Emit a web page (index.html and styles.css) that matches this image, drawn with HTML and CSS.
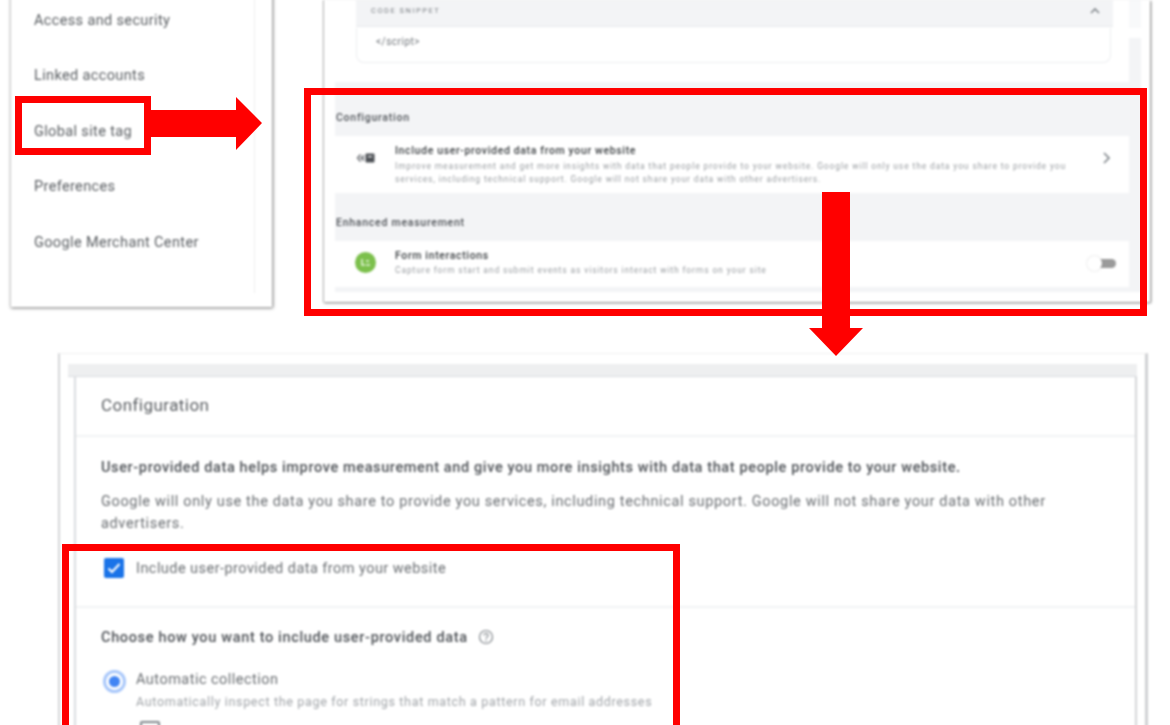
FILE: index.html
```html
<!DOCTYPE html>
<html lang="en">
<head>
    <meta charset="UTF-8">
    <meta name="viewport" content="width=device-width, initial-scale=1.0">
    <title>Global site tag configuration</title>
    <link rel="stylesheet" href="styles.css">
</head>
<body>
    <div class="canvas">

        <!-- left shot: settings menu -->
        <div class="shot shot-menu">
            <ul class="menu">
                <li>Access and security</li>
                <li>Linked accounts</li>
                <li>Global site tag</li>
                <li>Preferences</li>
                <li>Google Merchant Center</li>
            </ul>
        </div>

        <!-- top shot: tag settings page -->
        <div class="shot shot-tag">
            <div class="head-row">
                <div class="head-white">
                    <div class="head-strip">
                        <span>CODE SNIPPET</span>
                        <svg width="12" height="12" viewBox="0 0 12 12"><path d="M2 8l4-4 4 4" fill="none" stroke="#80868b" stroke-width="1.6"/></svg>
                    </div>
                </div>
            </div>
            <div class="snippet-row">
                <div class="snippet-white">
                    <div class="snippet-box">&lt;/script&gt;</div>
                </div>
            </div>
            <div class="settings">
                <h4>Configuration</h4>
                <div class="setting-card card-tall">
                    <div class="setting-icon">
                        <svg width="20" height="12" viewBox="0 0 20 12"><path d="M4.500 2.500L1.500 6l3 3.500M4 6h3M7 3v6" fill="none" stroke="#5f6368" stroke-width="1.300"/><rect x="9.500" y="1.500" width="9" height="9" rx="1" fill="#4d5156"/><rect x="12" y="4" width="4" height="1.200" fill="#fff"/></svg>
                    </div>
                    <div class="setting-text">
                        <div class="setting-title">Include user-provided data from your website</div>
                        <div class="setting-desc">Improve measurement and get more insights with data that people provide to your website. Google will only use the data you share to provide you services, including technical support. Google will not share your data with other advertisers.</div>
                    </div>
                    <svg class="setting-chevron" width="12" height="14" viewBox="0 0 12 14"><path d="M3 2l5 5-5 5" fill="none" stroke="#80868b" stroke-width="1.700"/></svg>
                </div>
                <h4>Enhanced measurement</h4>
                <div class="setting-card card-short">
                    <div class="setting-icon icon-round">
                        <svg width="21" height="21" viewBox="0 0 21 21"><circle cx="10.500" cy="10.500" r="10.500" fill="#7cc04c"/><path d="M7 7v6h3M11 9h3M11 13h4" fill="none" stroke="#e4f3d8" stroke-width="1.500"/></svg>
                    </div>
                    <div class="setting-text">
                        <div class="setting-title">Form interactions</div>
                        <div class="setting-desc">Capture form start and submit events as visitors interact with forms on your site</div>
                    </div>
                    <div class="toggle"><span class="toggle-knob"></span></div>
                </div>
            </div>
        </div>

        <!-- bottom shot: configuration dialog -->
        <div class="shot shot-config">
            <div class="config-strip"></div>
            <div class="config-card">
                <div class="config-title">Configuration</div>
                <div class="config-intro">
                    <p class="lead">User-provided data helps improve measurement and give you more insights with data that people provide to your website.</p>
                    <p class="note">Google will only use the data you share to provide you services, including technical support. Google will not share your data with other advertisers.</p>
                    <div class="check-row">
                        <svg width="20" height="20" viewBox="0 0 20 20"><rect width="20" height="20" rx="2" fill="#1a73e8"/><path d="M4.500 10.500l3.500 3.500 7.500-8" fill="none" stroke="#fff" stroke-width="2"/></svg>
                        <span>Include user-provided data from your website</span>
                    </div>
                </div>
                <div class="config-choose">
                    <div class="choose-title">
                        Choose how you want to include user-provided data
                        <svg width="16" height="16" viewBox="0 0 16 16"><circle cx="8" cy="8" r="6.500" fill="none" stroke="#80868b" stroke-width="1.200"/><path d="M6 6.500a2 2 0 1 1 3 1.700c-.7.4-1 .8-1 1.500" fill="none" stroke="#80868b" stroke-width="1.200"/><circle cx="8" cy="11.700" r=".8" fill="#80868b"/></svg>
                    </div>
                    <div class="radio-row">
                        <div class="radio"><span class="radio-dot"></span></div>
                        <div>
                            <div class="radio-label">Automatic collection</div>
                            <div class="radio-desc">Automatically inspect the page for strings that match a pattern for email addresses</div>
                        </div>
                    </div>
                    <div class="sub-check"></div>
                </div>
            </div>
        </div>

        <!-- red annotations -->
        <div class="mark mark-menu"></div>
        <div class="mark mark-settings"></div>
        <div class="mark mark-check"></div>
        <svg class="arrow arrow-right" width="114" height="54" viewBox="0 0 114 54"><polygon points="0,13 87,13 87,0 113,26 87,53 87,40 0,40" fill="#ff0000"/></svg>
        <svg class="arrow arrow-down" width="56" height="166" viewBox="0 0 56 166"><polygon points="14,0 42,0 42,136 55,136 28,164 1,136 14,136" fill="#ff0000"/></svg>
    </div>
</body>
</html>
```

FILE: styles.css
```css
* {
    box-sizing: border-box;
}

body {
    font-family: 'Roboto', sans-serif;
    background-color: #fff;
    color: #5f6368;
    margin: 0;
}

.canvas {
    position: relative;
    width: 1170px;
    height: 725px;
    overflow: hidden;
}

.shot {
    position: absolute;
    background-color: #fff;
    filter: blur(0.8px);
}

/* left shot */
.shot-menu {
    left: 10px;
    top: -8px;
    width: 262px;
    height: 315px;
    border-left: 1px solid #d0d0d0;
    box-shadow: 1px 1px 3px rgba(0, 0, 0, 0.55);
}

.menu {
    list-style-type: none;
    margin: 0;
    padding: 1px 0 0 23px;
    width: 244px;
    height: 301px;
    border-right: 1px solid #eeeeee;
}

.menu li {
    height: 55.4px;
    line-height: 55.4px;
    font-size: 14.500px;
    letter-spacing: 0.36px;
    color: #5a5e62;
}

/* top shot */
.shot-tag {
    left: 323px;
    top: 0;
    width: 827px;
    height: 302px;
    border-left: 1px solid #b4b4b4;
    box-shadow: 1px 1px 2px rgba(0, 0, 0, 0.55);
}

.head-row {
    display: flex;
    height: 28px;
    margin: 0 9px 0 11px;
    background-color: #f8f9fa;
}

.head-white {
    width: 794px;
    padding-left: 21px;
    background-color: #fff;
}

.head-strip {
    display: flex;
    align-items: center;
    justify-content: space-between;
    width: 757px;
    height: 27px;
    padding: 0 12px 5px 15px;
    background-color: #f3f4f6;
    border-bottom: 1px solid #e8eaed;
    font-size: 7.500px;
    letter-spacing: 1.500px;
    color: #7c8085;
}

.snippet-row {
    display: flex;
    height: 54px;
    margin: 0 9px 0 11px;
    background: linear-gradient(#fff 10px, #f3f4f6 10px);
}

.snippet-white {
    width: 794px;
    padding-left: 21px;
    background-color: #fff;
}

.snippet-box {
    width: 755px;
    height: 35px;
    padding: 8px 0 0 19px;
    border: 1px solid #eceef0;
    border-top: none;
    border-radius: 0 0 8px 8px;
    font-size: 10px;
    letter-spacing: 0.5px;
    color: #70757a;
}

.settings {
    height: 210px;
    margin: 0 9px 0 11px;
    padding: 29px 12px 0 0;
    background-color: #f3f4f6;
}

.settings h4 {
    margin: 0 0 12px 1px;
    height: 13px;
    line-height: 13px;
    font-size: 10.500px;
    font-weight: 500;
    letter-spacing: 0.75px;
    color: #4d5156;
}

.setting-card {
    display: flex;
    align-items: flex-start;
    height: 46px;
    padding-top: 9px;
    background-color: #fff;
}

.card-tall {
    height: 57px;
    margin-bottom: 23px;
}

.card-short .setting-desc {
    margin-top: 2px;
}

.setting-icon {
    display: flex;
    justify-content: center;
    width: 21px;
    margin: 7px 19px 0 20px;
}

.icon-round {
    margin-top: 2px;
}

.setting-text {
    width: 680px;
    flex-shrink: 0;
}

.setting-title {
    font-size: 10.500px;
    font-weight: 500;
    line-height: 12px;
    letter-spacing: 0.65px;
    color: #3c4043;
}

.setting-desc {
    margin-top: 3px;
    font-size: 8.500px;
    line-height: 13px;
    letter-spacing: 0.87px;
    color: #9a9ea2;
}

.setting-chevron {
    margin: 6px 0 0 26px;
}

.toggle {
    position: relative;
    width: 20px;
    height: 9px;
    margin: 9px 13px 0 auto;
    border-radius: 5px;
    background-color: #9a9a9a;
}

.toggle-knob {
    position: absolute;
    left: -9px;
    top: -3px;
    width: 15px;
    height: 15px;
    border-radius: 50%;
    background-color: #fff;
    box-shadow: 0 0 2px rgba(0, 0, 0, 0.2);
}

/* bottom shot */
.shot-config {
    left: 58px;
    top: 353px;
    width: 1090px;
    height: 420px;
    padding-top: 10px;
    border-top: 1px solid #f0f0f0;
    border-left: 2px solid #d4d6d8;
    border-right: 3px solid #cfd1d3;
}

.config-strip {
    height: 13px;
    margin: 0 8px;
    background-color: #eeeff0;
    border-bottom: 1px solid #dadce0;
}

.config-card {
    margin: 0 8px 0 14px;
    height: 400px;
    border-left: 2px solid #dadce0;
    border-right: 2px solid #d4d6d8;
}

.config-title {
    height: 60px;
    padding: 17px 0 0 25px;
    border-bottom: 2px solid #f1f3f4;
    font-size: 17px;
    line-height: 22px;
    letter-spacing: 0.45px;
    color: #5a5e62;
}

.config-intro {
    height: 171px;
    padding: 20px 0 0 25px;
    border-bottom: 2px solid #f1f3f4;
}

.lead {
    margin: 0 0 12px;
    font-size: 14.500px;
    font-weight: 500;
    line-height: 22px;
    letter-spacing: 0.62px;
    color: #4d5156;
}

.note {
    margin: 0 0 23px;
    max-width: 960px;
    font-size: 14.500px;
    line-height: 22px;
    letter-spacing: 0.65px;
    color: #6a6e72;
}

.check-row {
    display: flex;
    align-items: center;
    gap: 12px;
    margin-left: 3px;
    font-size: 14.500px;
    letter-spacing: 0.45px;
    color: #6a6e72;
}

.config-choose {
    padding: 19px 0 0 25px;
}

.choose-title {
    display: flex;
    align-items: center;
    gap: 10px;
    height: 20px;
    font-size: 14.500px;
    font-weight: 500;
    letter-spacing: 0.66px;
    color: #4d5156;
}

.radio-row {
    display: flex;
    gap: 10px;
    margin: 23px 0 0 2px;
}

.radio {
    display: flex;
    align-items: center;
    justify-content: center;
    width: 23px;
    height: 23px;
    border: 3px solid #a8c7fa;
    border-radius: 50%;
}

.radio-dot {
    width: 11px;
    height: 11px;
    border-radius: 50%;
    background-color: #4285f4;
}

.radio-label {
    font-size: 14.500px;
    line-height: 20px;
    letter-spacing: 0.47px;
    color: #6a6e72;
}

.radio-desc {
    margin-top: 4px;
    font-size: 12.500px;
    line-height: 16px;
    letter-spacing: 0.67px;
    color: #a0a4a8;
}

.sub-check {
    width: 20px;
    height: 20px;
    margin: 11px 0 0 39px;
    border: 2px solid #80868b;
    border-radius: 2px;
}

/* annotations */
.mark {
    position: absolute;
    border: 7px solid #ff0000;
    filter: blur(0.4px);
}

.mark-menu {
    left: 15px;
    top: 96px;
    width: 136px;
    height: 59px;
}

.mark-settings {
    left: 304px;
    top: 88px;
    width: 843px;
    height: 228px;
}

.mark-check {
    left: 62px;
    top: 544px;
    width: 618px;
    height: 240px;
}

.arrow {
    position: absolute;
    filter: blur(0.4px);
}

.arrow-right {
    left: 149px;
    top: 97px;
}

.arrow-down {
    left: 808px;
    top: 192px;
}
```
